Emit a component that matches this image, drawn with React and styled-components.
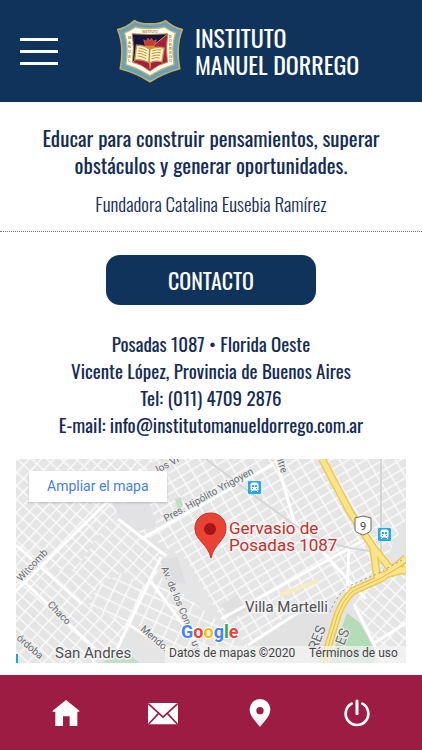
import React from 'react';
import styled, { createGlobalStyle } from 'styled-components';

const NAVY = '#10335b';
const CRIMSON = '#9c1c44';

const GlobalStyle = createGlobalStyle`
    * {
        box-sizing: border-box;
    }
    body {
        margin: 0;
        background: #fff;
        font-family: Oswald, 'Liberation Sans Narrow', 'Roboto Condensed', sans-serif;
        color: #152c55;
    }
`;

const Page = styled.div`
    display: flex;
    flex-direction: column;
    min-height: 100vh;
`;

const Header = styled.header`
    display: flex;
    align-items: center;
    gap: 59px;
    padding: 19px 20px 18px;
    background: ${NAVY};
`;

const MenuButton = styled.button`
    display: flex;
    flex-direction: column;
    gap: 9px;
    width: 38px;
    padding: 0;
    background: none;
    border: none;
    cursor: pointer;

    span {
        height: 3px;
        background: #fff;
    }
`;

const Brand = styled.a`
    display: flex;
    align-items: center;
    gap: 12px;
    color: #fff;
    text-decoration: none;
`;

const BrandName = styled.span`
    display: flex;
    flex-direction: column;
    padding-bottom: 2px;
    font-size: 24px;
    line-height: 27px;
`;

const Main = styled.main`
    flex: 1;
`;

const Motto = styled.section`
    padding: 22px 16px 14px;
    border-bottom: 1px dotted #777;
    text-align: center;
`;

const MottoText = styled.h1`
    margin: 0;
    font-size: 21px;
    font-weight: 400;
    line-height: 27px;
`;

const Founder = styled.p`
    margin: 12px 0 0;
    font-size: 19px;
    font-weight: 300;
    line-height: 27px;
`;

const Contact = styled.section`
    display: flex;
    flex-direction: column;
    align-items: center;
    padding: 23px 16px 12px;
`;

const ContactButton = styled.button`
    width: 54%;
    height: 50px;
    border: none;
    border-radius: 14px;
    background: ${NAVY};
    color: #fff;
    font-family: inherit;
    font-size: 22px;
    cursor: pointer;
`;

const Address = styled.address`
    margin: 25px 0 21px;
    font-size: 19px;
    font-style: normal;
    font-weight: 400;
    line-height: 27px;
    text-align: center;

    a {
        color: inherit;
        text-decoration: none;
    }
`;

const MapFrame = styled.div`
    position: relative;
    width: 100%;
    font-family: Roboto, sans-serif;

    svg {
        display: block;
        width: 100%;
    }
`;

const MapLink = styled.a`
    position: absolute;
    top: 12px;
    left: 13px;
    padding: 0 18px;
    background: #fff;
    box-shadow: 0 1px 2px rgba(0, 0, 0, 0.2);
    color: #4683cf;
    font-size: 14px;
    line-height: 31px;
    text-decoration: none;
`;

const TabBar = styled.nav`
    display: grid;
    grid-template-columns: repeat(4, 1fr);
    align-items: center;
    height: 75px;
    padding: 0 17px;
    background: ${CRIMSON};
`;

const Tab = styled.a`
    display: flex;
    justify-content: center;
    color: #fff;
`;

const Crest = () => (
    <svg width="66" height="65" viewBox="20 20 200 195" aria-hidden="true">
        <path
            d="M22 51 Q48 46 73 24 Q84 34 120 34 Q156 34 167 24 Q192 46 218 51 Q197 100 210 170 Q164 182 120 209 Q76 182 30 170 Q43 100 22 51Z"
            fill="#65a0bc"
            stroke="#c6ad5c"
            strokeWidth="5"
            strokeLinejoin="round"
        />
        <path
            d="M43 61 Q61 54 76 43 Q88 48 120 48 Q152 48 164 43 Q179 54 197 61 Q184 105 193 157 Q156 168 120 191 Q84 168 47 157 Q56 105 43 61Z"
            fill="#fffdf0"
            stroke="#cbb36a"
            strokeWidth="4"
        />
        <path d="M66 64 Q120 68 174 64 Q167 105 173 150 Q146 156 120 177 Q94 156 67 150 Q73 105 66 64Z" fill="#a91d43" />
        <path d="M66 64 Q120 68 174 64 L67 150 Q73 105 66 64Z" fill="#161541" />
        <path d="M174 64 L67 150" stroke="#caa24d" strokeWidth="3" />
        <path d="M66 64 Q120 68 174 64 Q167 105 173 150 Q146 156 120 177 Q94 156 67 150 Q73 105 66 64Z" fill="none" stroke="#b58b49" strokeWidth="3" />
        <path d="M101 82 L109 87 L114 77 L119 85 L125 77 L129 87 L139 82 L133 101 L106 101Z" fill="#c63a38" stroke="#e07b3a" strokeWidth="2" />
        <path d="M105 101 H135 L126 112 L122 170 H118 L114 112Z" fill="#c9913f" />
        <path d="M79 98 Q102 98 119 110 Q139 101 163 107 L156 149 Q136 143 118 152 Q99 141 74 142Z" fill="#fff2c4" stroke="#c6964a" strokeWidth="4" />
        <path d="M119 110 L117 151" stroke="#b87a30" strokeWidth="4" />
        <path
            d="M85 107 Q99 108 111 115 M84 115 Q98 116 110 123 M83 123 Q97 124 109 131 M82 131 Q96 132 108 139 M127 116 Q140 110 154 113 M126 124 Q140 118 152 121 M125 132 Q139 126 151 129 M124 140 Q138 134 149 137"
            fill="none"
            stroke="#b9923f"
            strokeWidth="3"
        />
        <g fill="#a98542" fontFamily="Liberation Sans, sans-serif" fontSize="12" fontWeight="700" textAnchor="middle">
            <text x="120" y="62" fontSize="9">INSTITUTO</text>
            {'MANUEL'.split('').map((c, i) => <text key={i} x="58" y={80 + i * 14}>{c}</text>)}
            {'DORREGO'.split('').map((c, i) => <text key={i} x="182" y={78 + i * 12}>{c}</text>)}
        </g>
    </svg>
);

const HomeIcon = () => (
    <svg width="30" height="30" viewBox="0 0 90 90" fill="currentColor">
        <path d="M45 6 L85 38 V41 H79 V84 H56 V55 H36 V84 H13 V41 H5 V38Z" />
    </svg>
);

const MailIcon = () => (
    <svg width="30" height="30" viewBox="0 0 90 90">
        <rect x="0" y="15" width="90" height="64" rx="3" fill="currentColor" />
        <path d="M1 17 L45 57 L89 17 M2 78 L32 46 M88 78 L58 46" fill="none" stroke={CRIMSON} strokeWidth="5" />
    </svg>
);

const PinIcon = () => (
    <svg width="30" height="30" viewBox="0 0 90 90">
        <defs>
            <linearGradient id="pinShade" x1="0" y1="0" x2="0" y2="1">
                <stop offset="0.5" stopColor="#fff" />
                <stop offset="1" stopColor="#dde0e2" />
            </linearGradient>
        </defs>
        <path
            fill="url(#pinShade)"
            fillRule="evenodd"
            d="M45 3 A31 31 0 0 1 76 34 C76 54 60 68 45 87 C30 68 14 54 14 34 A31 31 0 0 1 45 3Z M45 27 A11 11 0 1 0 45 49 A11 11 0 1 0 45 27Z"
        />
    </svg>
);

const PowerIcon = () => (
    <svg width="30" height="30" viewBox="0 0 90 90" fill="none" stroke="currentColor" strokeWidth="8" strokeLinecap="round">
        <path d="M29 17 A34 34 0 1 0 61 17" />
        <path d="M45 9 V47" strokeWidth="9" />
    </svg>
);

const Train = ({ x, y }) => (
    <g transform={`translate(${x} ${y})`}>
        <rect width="13" height="13" rx="1" fill="#29a9e0" />
        <path d="M3 3 Q3 2 5 2 H8 Q10 2 10 3 V9 H3Z M3 11 L5 9 M10 11 L8 9" fill="#fff" stroke="#fff" />
        <path d="M4 4 H6 V6 H4Z M7 4 H9 V6 H7Z M4 7 H5 V8 H4Z M8 7 H9 V8 H8Z" fill="#29a9e0" />
    </g>
);

// street names, each one turned along its street
const streets = [
    { name: 'los Vi', x: 142, y: 14, turn: -28 },
    { name: 'Pres. Hipólito Yrigoyen', x: 150, y: 63, turn: -29 },
    { name: 'itre', x: 261, y: 1, turn: 72 },
    { name: 'Witcomb', x: 5, y: 123, turn: -47 },
    { name: 'Chaco', x: 31, y: 146, turn: 46 },
    { name: 'órdoba', x: 0, y: 180, turn: 41 },
    { name: 'Mendo.', x: 124, y: 171, turn: 41 },
    { name: 'Av. de los Con', x: 145, y: 109, turn: 67 },
    { name: 'uyr', x: 175, y: 183, turn: 67 },
];

const google = [['G', '#4285f4'], ['o', '#ea4335'], ['o', '#fbbc05'], ['g', '#4285f4'], ['l', '#34a853'], ['e', '#ea4335']];

const CityMap = () => (
    <svg viewBox="0 0 390 204" role="img" aria-label="Mapa de Gervasio de Posadas 1087" fontFamily="Roboto, sans-serif">
        <defs>
            <pattern id="blocksWest" width="10" height="9" patternUnits="userSpaceOnUse" patternTransform="rotate(-47)">
                <path d="M0 0 H10 M0 0 V9" stroke="#fafafa" strokeWidth="3" />
            </pattern>
            <pattern id="blocksSouth" width="9" height="12" patternUnits="userSpaceOnUse" patternTransform="rotate(-48)">
                <path d="M0 0 H9 M0 0 V12" stroke="#fafafa" strokeWidth="3" />
            </pattern>
            <pattern id="blocksEast" width="12" height="9" patternUnits="userSpaceOnUse" patternTransform="rotate(-31)">
                <path d="M0 0 H12 M0 0 V9" stroke="#fafafa" strokeWidth="3" />
            </pattern>
            <pattern id="blocksMid" width="13" height="11" patternUnits="userSpaceOnUse" patternTransform="rotate(25)">
                <path d="M0 0 H13 M0 0 V11" stroke="#fafafa" strokeWidth="3" />
            </pattern>
        </defs>
        <rect width="390" height="204" fill="#e5e5e6" />
        <path d="M0 0 H55 L95 58 L60 110 L0 112Z" fill="url(#blocksWest)" />
        <path d="M55 0 H138 L118 36 L95 58Z" fill="url(#blocksWest)" />
        <path d="M0 112 L60 110 L95 58 L150 98 L102 184 L90 204 H0Z" fill="url(#blocksSouth)" />
        <path d="M82 126 L108 113 L133 132 L115 165 L72 148Z" fill="#e5e5e6" />
        <path d="M82 126 L108 113 L133 132 L115 165 L72 148Z" fill="url(#blocksMid)" />
        <path d="M138 0 H390 V60 L367 106 L334 134 L280 150 L232 186 L205 160 L170 100 L118 70Z" fill="url(#blocksEast)" />
        <path d="M118 130 L146 118 L232 186 L225 204 H180 L120 165Z" fill="url(#blocksMid)" />
        <path d="M362 112 L390 98 V204 H364 L338 145Z" fill="url(#blocksSouth)" />
        <path d="M232 186 L284 150 L320 148 L302 204 H230Z" fill="#e2e2e3" />
        <path d="M97 45 L132 41 L141 68 L122 72 L106 62Z" fill="#e2e2e4" />
        <path d="M144 101 L161 98 L170 125 L151 122Z" fill="#dedee0" />
        <path d="M205 146 L221 136 L232 150 L216 161Z" fill="#e0e0e1" />
        <path d="M159 40 L165 38 L167 47 L162 51Z M90 199 L108 192 L124 204 H88Z" fill="#c0dfc4" />
        <path d="M331 154 L344 164 L361 194 L358 204 H313Z" fill="#b5dcb9" />
        <g fill="none" stroke="#fff" strokeWidth="3">
            <path d="M0 115 L90 200 M0 86 L66 145 M145 98 L101 190 M102 60 L150 97" />
            <path d="M0 132 L125 10 M125 80 L258 5 M205 160 L350 80 M232 186 L286 151" />
            <path d="M260 0 L278 62 L350 140 M110 164 L174 204 M133 120 L190 196" />
            <path d="M338 145 L367 204 M390 164 L358 184 M331 134 L333 90" />
        </g>
        <path d="M190 0 L240 38 L276 64 Q310 88 355 92 M365 0 V95" fill="none" stroke="#d4d5d6" strokeWidth="2" />
        <path d="M264 136 L302 122" stroke="#f6edc1" strokeWidth="4" />
        <g fill="none" strokeLinejoin="round">
            <path d="M306 0 L334 53 L357 88 L373 108 L390 112 M390 99 L366 119 L337 132 Q326 142 321 158 L307 204 M357 88 L361 118 L390 110" stroke="#ecc957" strokeWidth="8" />
            <path d="M306 0 L334 53 L357 88 L373 108 L390 112 M390 99 L366 119 L337 132 Q326 142 321 158 L307 204 M357 88 L361 118 L390 110" stroke="#fae58d" strokeWidth="5" />
            <path d="M390 104 L365 119 L337 132 Q326 142 321 158 L307 204" stroke="#e5ba43" />
            <path d="M386 101 L361 115 L333 127 Q320 136 314 154" stroke="#96969a" strokeDasharray="2 3" />
        </g>
        <g fill="#6b6b6f" stroke="#eee" strokeWidth="2" paintOrder="stroke" fontSize="10">
            {streets.map((s) => (
                <text key={s.name} transform={`translate(${s.x} ${s.y}) rotate(${s.turn})`}>{s.name}</text>
            ))}
            <text transform="translate(301 192) rotate(-69)" fontSize="14">RES</text>
            <text transform="translate(328 187) rotate(-69)" fontSize="14">ES</text>
        </g>
        <rect y="195" width="2" height="9" fill="#18a9c9" />
        <Train x={232} y={22} />
        <Train x={362} y={69} />
        <path d="M339 59 L347 57 L355 59 V71 Q355 73 347 76 Q339 73 339 71Z" fill="#fff" stroke="#68686b" strokeLinejoin="round" />
        <text x="347" y="71" fontSize="11" fill="#444" textAnchor="middle">9</text>
        <path d="M194 54 A15 15 0 0 1 210 70 C210 81 198 85 195 99 C192 85 179 81 179 70 A15 15 0 0 1 194 54Z" fill="#e94335" stroke="#c8352b" />
        <circle cx="194" cy="70" r="6" fill="#a51716" />
        <g fill="#c4302b" stroke="#f3f3f3" strokeWidth="3" paintOrder="stroke" fontSize="17">
            <text x="213" y="75">Gervasio de</text>
            <text x="213" y="92">Posadas 1087</text>
        </g>
        <g fill="#505054" stroke="#f3f3f3" strokeWidth="3" paintOrder="stroke" fontSize="15">
            <text x="229" y="153">Villa Martelli</text>
            <text x="39" y="199">San Andres</text>
        </g>
        <rect x="149" y="187" width="241" height="17" fill="#f3f3f3" fillOpacity="0.75" />
        <text x="165" y="179" fontSize="18" fontWeight="700" stroke="#fff" strokeWidth="2" paintOrder="stroke">
            {google.map(([letter, fill], i) => <tspan key={i} fill={fill}>{letter}</tspan>)}
        </text>
        <g fill="#444" fontSize="12">
            <text x="153" y="198">Datos de mapas ©2020</text>
            <text x="293" y="198">Términos de uso</text>
        </g>
    </svg>
);

const App = () => {
    return (
        <>
            <GlobalStyle />
            <Page>
                <Header>
                    <MenuButton type="button" aria-label="Menú">
                        <span />
                        <span />
                        <span />
                    </MenuButton>
                    <Brand href="#inicio">
                        <Crest />
                        <BrandName>
                            <span>INSTITUTO</span>
                            <span>MANUEL DORREGO</span>
                        </BrandName>
                    </Brand>
                </Header>
                <Main>
                    <Motto>
                        <MottoText>
                            Educar para construir pensamientos, superar<br />
                            obstáculos y generar oportunidades.
                        </MottoText>
                        <Founder>Fundadora Catalina Eusebia Ramírez</Founder>
                    </Motto>
                    <Contact>
                        <ContactButton type="button">CONTACTO</ContactButton>
                        <Address>
                            Posadas 1087 • Florida Oeste<br />
                            Vicente López, Provincia de Buenos Aires<br />
                            Tel: <a href="tel:+541147092876">(011) 4709 2876</a><br />
                            E-mail: <a href="mailto:info@institutomanueldorrego.com.ar">info@institutomanueldorrego.com.ar</a>
                        </Address>
                        <MapFrame>
                            <CityMap />
                            <MapLink href="#mapa">Ampliar el mapa</MapLink>
                        </MapFrame>
                    </Contact>
                </Main>
                <TabBar>
                    <Tab href="#inicio" aria-label="Inicio"><HomeIcon /></Tab>
                    <Tab href="#mensajes" aria-label="Mensajes"><MailIcon /></Tab>
                    <Tab href="#ubicacion" aria-label="Ubicación"><PinIcon /></Tab>
                    <Tab href="#salir" aria-label="Salir"><PowerIcon /></Tab>
                </TabBar>
            </Page>
        </>
    );
};

export default App;
